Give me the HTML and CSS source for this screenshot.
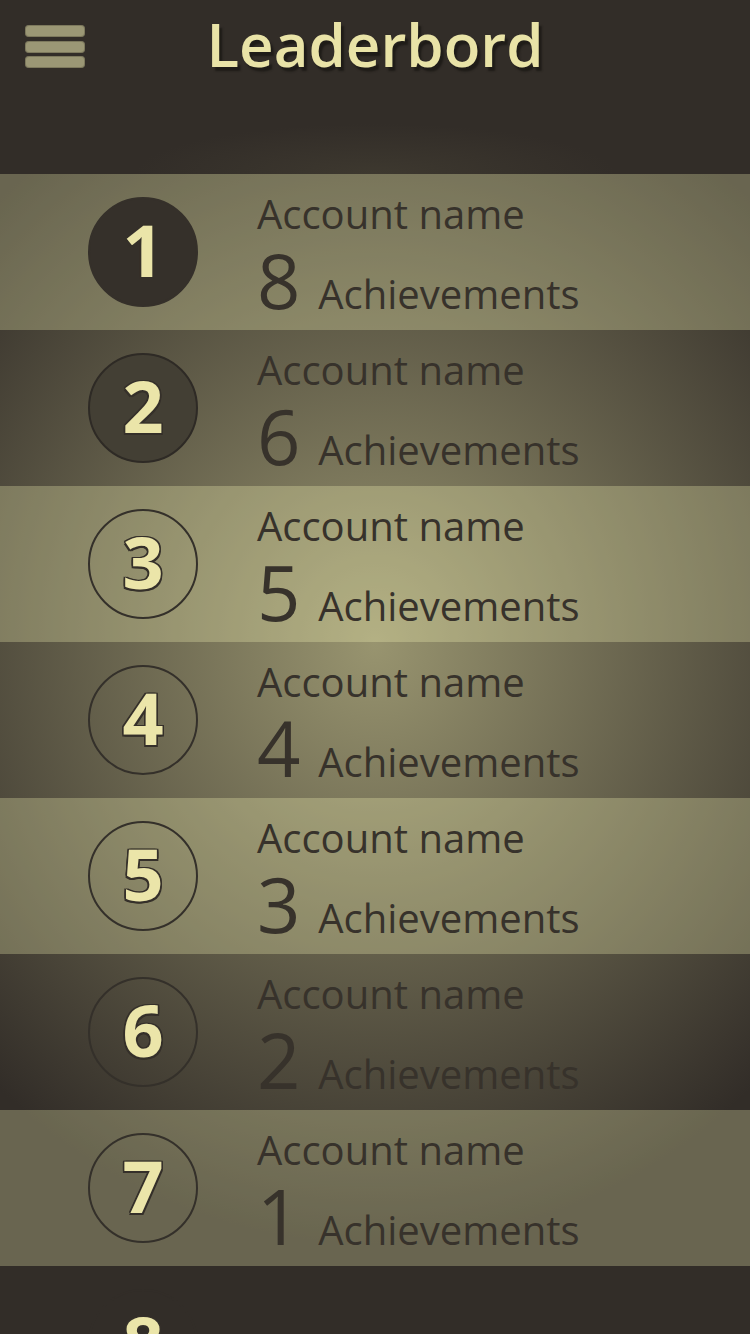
FILE: index.html
```html
<!DOCTYPE html>
<html lang="en">
<head>
<meta charset="utf-8">
<title>Leaderbord</title>
<link rel="stylesheet" href="styles.css">
</head>
<body>
<header class="header">
  <div class="menu" aria-label="Menu"><span></span><span></span><span></span></div>
  <h1 class="title">Leaderbord</h1>
  <div></div>
</header>
<main class="board">
  <div class="row"><div class="rank rank-1">1</div><div class="info"><div class="name">Account name</div><div class="count">8 <span class="label">Achievements</span></div></div></div>
  <div class="row"><div class="rank rank-2">2</div><div class="info"><div class="name">Account name</div><div class="count">6 <span class="label">Achievements</span></div></div></div>
  <div class="row"><div class="rank">3</div><div class="info"><div class="name">Account name</div><div class="count">5 <span class="label">Achievements</span></div></div></div>
  <div class="row"><div class="rank">4</div><div class="info"><div class="name">Account name</div><div class="count">4 <span class="label">Achievements</span></div></div></div>
  <div class="row"><div class="rank">5</div><div class="info"><div class="name">Account name</div><div class="count">3 <span class="label">Achievements</span></div></div></div>
  <div class="row"><div class="rank">6</div><div class="info"><div class="name">Account name</div><div class="count">2 <span class="label">Achievements</span></div></div></div>
  <div class="row"><div class="rank">7</div><div class="info"><div class="name">Account name</div><div class="count">1 <span class="label">Achievements</span></div></div></div>
  <div class="row"><div class="rank rank-faded">8</div></div>
</main>
</body>
</html>
```
FILE: styles.css
```css
html { background: #322d28; }
body {
  margin: 0;
  font-family: "Open Sans", "DejaVu Sans", sans-serif;
  background: #322d28;
}
.header {
  height: 174px;
  box-sizing: border-box;
  padding-top: 4px;
  display: grid;
  grid-template-columns: 1fr auto 1fr;
  align-items: start;
  background:
    radial-gradient(ellipse 240px 50px at 50% 100%, rgba(66, 61, 50, 0.7), rgba(50, 45, 40, 0)),
    #322d28;
}
.menu {
  margin: 21px 0 0 25px;
  width: 60px;
  display: flex;
  flex-direction: column;
  gap: 3.5px;
}
.menu span {
  display: block;
  height: 12px;
  border-radius: 4px;
  background: #9b9775;
  box-shadow: inset 0 0 0 1px rgba(70, 66, 50, 0.35);
}
.title {
  margin: 0;
  font-family: "Open Sans", sans-serif;
  font-weight: 600;
  font-size: 60px;
  line-height: 80px;
  color: #e9e3a7;
  text-shadow: 3px 4px 2px #1f1c18;
}
.board {
  background:
    radial-gradient(560px 600px at 50% 470px, #98946f 0%, #322d28 100%) no-repeat,
    #322d28;
}
.row {
  height: 156px;
  box-sizing: border-box;
  padding-left: 88px;
  display: flex;
  align-items: center;
}
.row:nth-child(odd) {
  background: rgba(255, 255, 190, 0.27);
}
.rank {
  flex: none;
  width: 110px;
  height: 110px;
  box-sizing: border-box;
  border-radius: 50%;
  border: 2px solid #34302a;
  display: flex;
  align-items: center;
  justify-content: center;
  padding-bottom: 7px;
  font-weight: 700;
  font-size: 72px;
  line-height: 1;
  color: #ebe5a9;
  text-shadow:
    -1.5px -1.5px 0 #35302a, 1.5px -1.5px 0 #35302a,
    -1.5px 1.5px 0 #35302a, 1.5px 1.5px 0 #35302a,
    0 1.5px 0 #35302a, 0 -1.5px 0 #35302a,
    1.5px 0 0 #35302a, -1.5px 0 0 #35302a;
}
.rank-1 {
  background: #35302a;
  border-color: #35302a;
}
.rank-2 {
  background: #433f34;
  border-color: #2e2a25;
}
.rank-faded {
  border-color: #322d28;
}
.info {
  align-self: flex-start;
  margin-left: 59px;
  padding-top: 16px;
  color: #37322b;
}
.name {
  font-size: 40px;
  line-height: 48px;
  white-space: nowrap;
}
.count {
  font-size: 76px;
  line-height: 84px;
  white-space: nowrap;
  word-spacing: -2px;
}
.count .label {
  font-size: 40px;
  word-spacing: normal;
}
```
